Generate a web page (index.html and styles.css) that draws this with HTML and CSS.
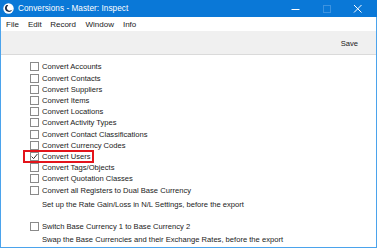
FILE: index.html
```html
<!DOCTYPE html>
<html>
<head>
<meta charset="utf-8">
<link rel="stylesheet" href="styles.css">
</head>
<body>
<div class="win">
  <div class="titlebar">
    <svg class="appicon" width="11" height="11" viewBox="0 0 11 11">
      <circle cx="5.5" cy="5.5" r="5.2" fill="#ffffff"/>
      <path d="M3.2 2.2 C1.4 3.8 1.6 7.2 4.2 8.6 C6.4 9.7 8.8 8.6 9.4 6.6 C8.2 8.0 5.8 8.3 4.6 6.8 C3.4 5.4 3.6 3.4 5.2 2.4 C4.6 2.0 3.8 1.9 3.2 2.2 Z" fill="#1b2a44"/>
    </svg>
    <span class="title">Conversions - Master: Inspect</span>
    <div class="controls">
      <svg class="ctl" width="10" height="10" viewBox="0 0 10 10"><line x1="0.5" y1="5.5" x2="8.5" y2="5.5" stroke="#ffffff" stroke-width="1"/></svg>
      <svg class="ctl" width="10" height="10" viewBox="0 0 10 10"><rect x="1.5" y="1.5" width="7" height="7" fill="none" stroke="#3d93e0" stroke-width="1"/></svg>
      <svg class="ctl" width="10" height="10" viewBox="0 0 10 10"><path d="M1 1 L8.5 8.5 M8.5 1 L1 8.5" stroke="#ffffff" stroke-width="1"/></svg>
    </div>
  </div>
  <div class="body">
    <div class="menubar">
      <span class="m-file">File</span>
      <span class="m-edit">Edit</span>
      <span class="m-record">Record</span>
      <span class="m-window">Window</span>
      <span class="m-info">Info</span>
    </div>
    <div class="toolbar">
      <span class="save">Save</span>
    </div>
    <div class="content">
      <div class="row"><span class="cb"></span><span>Convert Accounts</span></div>
      <div class="row"><span class="cb"></span><span>Convert Contacts</span></div>
      <div class="row"><span class="cb"></span><span>Convert Suppliers</span></div>
      <div class="row"><span class="cb"></span><span>Convert Items</span></div>
      <div class="row"><span class="cb"></span><span>Convert Locations</span></div>
      <div class="row"><span class="cb"></span><span>Convert Activity Types</span></div>
      <div class="row"><span class="cb"></span><span>Convert Contact Classifications</span></div>
      <div class="row"><span class="cb"></span><span>Convert Currency Codes</span></div>
      <div class="row hl"><span class="cb checked"><svg width="7" height="7" viewBox="0 0 7 7"><path d="M0.6 3.6 L2.6 5.6 L6.4 1.0" fill="none" stroke="#333333" stroke-width="1"/></svg></span><span>Convert Users</span></div>
      <div class="row"><span class="cb"></span><span>Convert Tags/Objects</span></div>
      <div class="row"><span class="cb"></span><span>Convert Quotation Classes</span></div>
      <div class="row"><span class="cb"></span><span>Convert all Registers to Dual Base Currency</span></div>
      <div class="note note1">Set up the Rate Gain/Loss in N/L Settings, before the export</div>
      <div class="row row-switch"><span class="cb"></span><span>Switch Base Currency 1 to Base Currency 2</span></div>
      <div class="note note2">Swap the Base Currencies and their Exchange Rates, before the export</div>
    </div>
  </div>
</div>
</body>
</html>
```
FILE: styles.css
```css
html, body {
  margin: 0;
  padding: 0;
}
body {
  width: 377px;
  height: 248px;
  overflow: hidden;
  background: #ffffff;
  font-family: "Liberation Sans", Arial, sans-serif;
  color: #1a1a1a;
}
.win {
  width: 377px;
  height: 248px;
  display: flex;
  flex-direction: column;
}
.titlebar {
  height: 17px;
  background: #0a78d7;
  display: flex;
  align-items: center;
  color: #ffffff;
  flex: none;
}
.appicon {
  margin-left: 3px;
  margin-right: 4px;
}
.title {
  font-size: 8.2px;
  letter-spacing: 0.05px;
}
.controls {
  margin-left: auto;
  display: flex;
  align-items: center;
  gap: 21px;
  margin-right: 14px;
}
.body {
  flex: 1;
  border-left: 1px solid #4ba3ec;
  border-right: 1px solid #4ba3ec;
  border-bottom: 1px solid #4ba3ec;
  display: flex;
  flex-direction: column;
}
.menubar {
  height: 14px;
  display: flex;
  align-items: center;
  font-size: 8px;
  background: #ffffff;
}
.menubar span {
  display: block;
}
.m-file { margin-left: 5px; }
.m-edit { margin-left: 9px; }
.m-record { margin-left: 8.5px; }
.m-window { margin-left: 9.5px; }
.m-info { margin-left: 9px; }
.toolbar {
  height: 23px;
  background: #f0f0f0;
  border-bottom: 1px solid #dadada;
  display: flex;
  align-items: center;
  justify-content: flex-end;
  font-size: 7.6px;
}
.save {
  margin-right: 18px;
  margin-top: 1px;
}
.content {
  padding-left: 29px;
  padding-top: 6.4px;
  font-size: 7.6px;
}
.row {
  height: 11.2px;
  display: flex;
  align-items: center;
  position: relative;
  width: max-content;
}
.cb {
  width: 7px;
  height: 7px;
  border: 1px solid #8a8a8a;
  background: #ffffff;
  margin-right: 3px;
  flex: none;
  display: flex;
  align-items: center;
  justify-content: center;
}
.hl::after {
  content: "";
  position: absolute;
  left: -7px;
  right: -3px;
  top: -1.3px;
  bottom: -0.6px;
  border: 2px solid #e3141b;
}
.note {
  height: 11.2px;
  line-height: 11.2px;
  padding-left: 12px;
  white-space: nowrap;
}
.note1 { margin-top: 3.2px; }
.row-switch { margin-top: 11.1px; }
.note2 { margin-top: 1.8px; }
```
